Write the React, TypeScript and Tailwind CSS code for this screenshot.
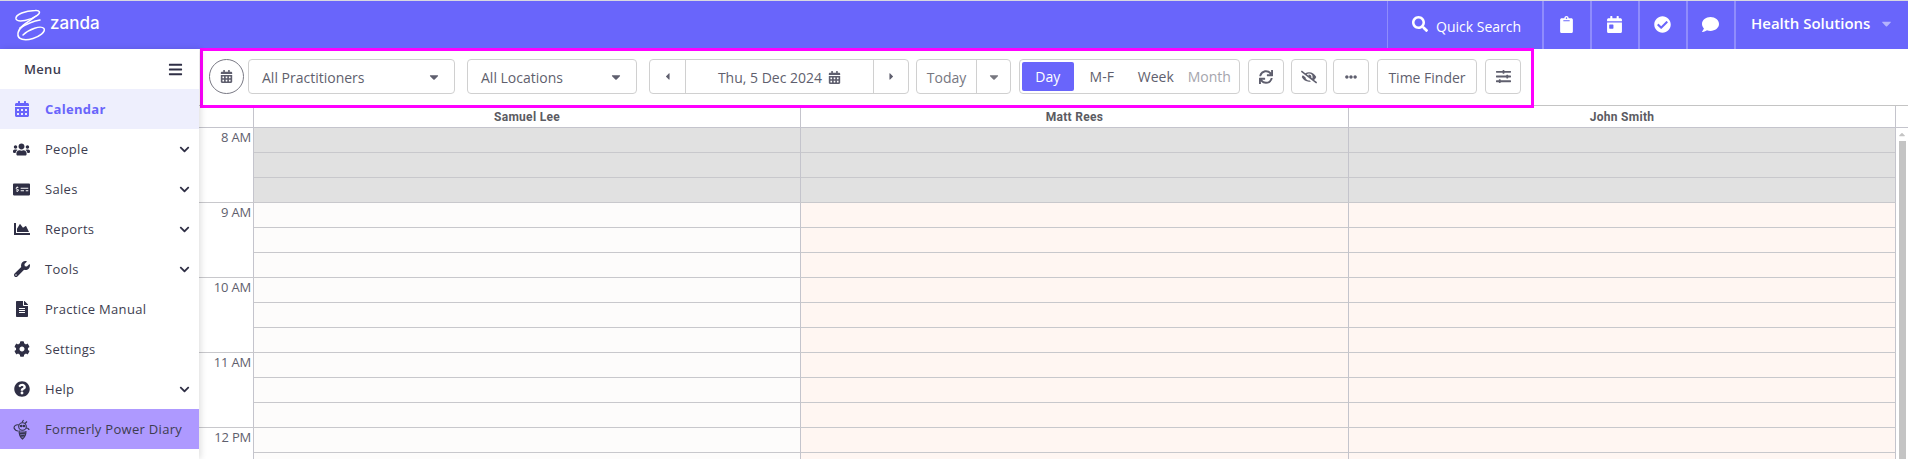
import {
  FaBars,
  FaCalendarAlt,
  FaCalendarDay,
  FaCaretDown,
  FaCaretLeft,
  FaCaretRight,
  FaChartArea,
  FaCheckCircle,
  FaChevronDown,
  FaClipboard,
  FaComment,
  FaEllipsisH,
  FaEyeSlash,
  FaFileAlt,
  FaMoneyCheckAlt,
  FaQuestionCircle,
  FaSearch,
  FaSlidersH,
  FaSync,
  FaUsers,
  FaWrench,
  FaCog,
} from "react-icons/fa";

const ZandaLogo = () => (
  <svg width="33" height="33" viewBox="0 0 33 33" fill="none" stroke="#fff" strokeWidth="1.5" strokeLinecap="round">
    <path d="M2 10C1 5 12 2 21 1.5C26 1 27 3.5 23 6.5C17 11 4 14 2 10Z" />
    <path d="M23 6.5C17 11 5 17 4 24C3 31 11 32 19 29.5C25 27.5 32 23 30 19.5C27 16 15 20 9 26" />
    <path d="M6 19C11 16 20 12 26 11" />
  </svg>
);

const BeeIcon = () => (
  <svg width="17" height="21" viewBox="0 0 17 21" fill="none" stroke="#34344c" strokeWidth="1.1">
    <path d="M6 6C3 5 1 7 1 9c1 2 3 3 4 3" />
    <circle cx="9.5" cy="7.5" r="3.8" />
    <circle cx="8.2" cy="7" r="0.8" fill="#34344c" />
    <circle cx="11" cy="7" r="0.8" fill="#34344c" />
    <path d="M9 3.5L10.5 1M12 4.5L14 2.5M13 9c2 0 3 1 3 2M6 11.5c0 4 1.5 7 3.5 8.5c2-1.5 3.5-4 3.5-8" fill="#34344c" fillOpacity="0.45" />
    <path d="M6.5 14.5l6-0.5M7.5 17l4-0.5" strokeWidth="1.4" />
  </svg>
);

const menuItems = [
  { label: "People", icon: <FaUsers size={17} />, more: true },
  { label: "Sales", icon: <FaMoneyCheckAlt size={17} />, more: true },
  { label: "Reports", icon: <FaChartArea size={16} />, more: true },
  { label: "Tools", icon: <FaWrench size={16} />, more: true },
  { label: "Practice Manual", icon: <FaFileAlt size={16} />, more: false },
  { label: "Settings", icon: <FaCog size={16} />, more: false },
  { label: "Help", icon: <FaQuestionCircle size={16} />, more: true },
];

const Sidebar = () => (
  <aside className="relative z-10 flex w-[199px] shrink-0 flex-col bg-white text-[13px] font-medium tracking-[0.3px] text-[#3d3d50] shadow-[2px_0_6px_rgba(0,0,0,0.12)]">
    <div className="flex h-10 items-center justify-between pl-6 pr-[16px]">
      <span className="pt-[1px] font-semibold">Menu</span>
      <FaBars size={15} className="text-[#2f2f45]" />
    </div>
    <div className="flex h-10 items-center bg-[#eeeffd] text-[#6965fb]">
      <span className="flex w-[45px] justify-center pr-[2px]">
        <FaCalendarAlt size={16} />
      </span>
      <span className="pt-[1px] font-bold">Calendar</span>
    </div>
    {menuItems.map((item) => (
      <div key={item.label} className="flex h-10 items-center pr-[9px]">
        <span className="flex w-[45px] justify-center pr-[2px] text-[#2f2f45]">{item.icon}</span>
        <span className="flex-1 pt-[1px]">{item.label}</span>
        {item.more && <FaChevronDown size={11} className="text-[#2f2f45]" />}
      </div>
    ))}
    <div className="flex h-10 items-center bg-[#ae99ff]">
      <span className="flex w-[45px] justify-center pr-[2px]">
        <BeeIcon />
      </span>
      <span className="pt-[1px]">Formerly Power Diary</span>
    </div>
  </aside>
);

const TopIcon = ({ children }: { children: React.ReactNode }) => (
  <div className="flex h-full w-[48px] items-center justify-center border-l-2 border-[#8f8cfc] pb-[2px] pr-[1px] text-white">{children}</div>
);

const TopBar = () => (
  <header className="flex h-[49px] items-stretch border-t border-[#d8d8e0] bg-[#6965fb] text-white">
    <div className="flex w-[199px] items-center pl-[14px]">
      <ZandaLogo />
      <span className="mb-[3px] ml-[3px] font-['Inter',sans-serif] text-[17px] font-medium leading-none">zanda</span>
    </div>
    <div className="flex-1" />
    <div className="flex w-[155px] items-center border-l border-[#8f8cfc] pl-[24px]">
      <FaSearch size={16} className="mb-[3px]" />
      <span className="ml-[8px] mt-[2px] text-[14px]">Quick Search</span>
    </div>
    <TopIcon>
      <FaClipboard size={17} />
    </TopIcon>
    <TopIcon>
      <FaCalendarDay size={17} />
    </TopIcon>
    <TopIcon>
      <FaCheckCircle size={17} />
    </TopIcon>
    <TopIcon>
      <FaComment size={17} />
    </TopIcon>
    <div className="flex w-[174px] items-center border-l-2 border-[#8f8cfc] pb-[3px] pl-[15px] text-[15px] font-semibold">
      <span>Health Solutions</span>
      <FaCaretDown size={15} className="ml-[9px] text-[#b5b3fd]" />
    </div>
  </header>
);

const btn = "flex h-[35px] items-center rounded-[4px] border border-[#d0d0d0] bg-white text-[#5f5f6e]";

const Select = ({ label, width }: { label: string; width: string }) => (
  <div className={`${btn} ${width} justify-between border-[#bdbdbd] pl-[13px] pr-[13px] text-[14px]`}>
    <span className="pt-[1px]">{label}</span>
    <FaCaretDown size={14} className="text-[#5f5f6e]" />
  </div>
);

const IconButton = ({ className, children }: { className: string; children: React.ReactNode }) => (
  <div className={`${btn} ${className} w-[36px] justify-center`}>{children}</div>
);

const Toolbar = () => (
  <div className="relative flex h-[57px] items-start border-b border-[#c4c4c4] bg-white pl-[10px] pt-[10px]">
    <div className="flex h-[35px] w-[35px] items-center justify-center rounded-full border border-[#7a7a85] text-[#5f5f6e]">
      <FaCalendarAlt size={13} />
    </div>
    <div className="ml-[4px]">
      <Select label="All Practitioners" width="w-[207px]" />
    </div>
    <div className="ml-[12px]">
      <Select label="All Locations" width="w-[170px]" />
    </div>
    <div className={`${btn} ml-[12px] w-[260px]`}>
      <span className="flex h-full w-[36px] items-center justify-center border-r border-[#d0d0d0]">
        <FaCaretLeft size={11} />
      </span>
      <span className="flex h-full flex-1 items-center justify-center gap-[6px] pt-[1px] text-[14px]">
        Thu, 5 Dec 2024
        <FaCalendarAlt size={13} />
      </span>
      <span className="flex h-full w-[35px] items-center justify-center border-l border-[#d0d0d0]">
        <FaCaretRight size={11} />
      </span>
    </div>
    <div className={`${btn} ml-[7px] w-[95px]`}>
      <span className="flex h-full flex-1 items-center justify-center border-r border-[#d0d0d0] pt-[1px] text-[14px] text-[#77777f]">Today</span>
      <span className="flex h-full w-[33px] items-center justify-center">
        <FaCaretDown size={14} className="text-[#77777f]" />
      </span>
    </div>
    <div className={`${btn} ml-[8px] w-[221px] px-[2px] text-[14px]`}>
      <span className="flex h-[29px] w-[52px] items-center justify-center rounded-[2px] bg-[#6965fb] text-white">Day</span>
      <span className="w-[57px] text-center">M-F</span>
      <span className="w-[52px] text-center">Week</span>
      <span className="w-[56px] text-center text-[#a5a5ad]">Month</span>
    </div>
    <IconButton className="ml-[8px]">
      <FaSync size={14} />
    </IconButton>
    <IconButton className="ml-[7px]">
      <FaEyeSlash size={16} />
    </IconButton>
    <IconButton className="ml-[6px]">
      <FaEllipsisH size={12} />
    </IconButton>
    <div className={`${btn} ml-[8px] w-[100px] justify-center pt-[1px] text-[14px]`}>Time Finder</div>
    <IconButton className="ml-[8px]">
      <FaSlidersH size={15} />
    </IconButton>
    <div className="pointer-events-none absolute left-[1px] top-[-1px] h-[60px] w-[1334px] border-[3px] border-[#ff00ff]" />
  </div>
);

const hours = ["8 AM", "9 AM", "10 AM", "11 AM", "12 PM"];
const practitioners = ["Samuel Lee", "Matt Rees", "John Smith"];
const colWidths = ["w-[547px]", "w-[548px]", "w-[547px]"];

const Scheduler = () => (
  <div className="min-h-0 flex-1 overflow-hidden">
    <div className="flex h-[22px] border-b border-[#c4c4cc] bg-white font-['Roboto',sans-serif] text-[12px] font-bold tracking-[0.3px] text-[#5b5b62]">
      <div className="w-[54px] shrink-0" />
      {practitioners.map((name, i) => (
        <div key={name} className={`${colWidths[i]} flex items-center justify-center border-l border-[#c4c4cc] pt-[1px]`}>
          {name}
        </div>
      ))}
      <div className="w-[13px] border-l border-[#c4c4cc]" />
    </div>
    <div className="relative flex">
      <div className="flex-1">
        {hours.map((hour, h) => (
          <div key={hour} className="flex h-[75px] border-b border-[#c8c8cc]">
            <div className="w-[54px] shrink-0 pr-[2px] text-right text-[13px] leading-[19px] tracking-[-0.2px] text-[#5f5f6e]">{hour}</div>
            {practitioners.map((name, i) => (
              <div
                key={name}
                className={`${colWidths[i]} flex flex-col border-l border-[#c4c4cc] ${
                  h === 0 ? "bg-[#e1e1e1]" : i === 0 ? "bg-[#fdfcfb]" : "bg-[#fff6f2]"
                }`}
              >
                <div className="h-[25px] border-b border-[#c8c8cc]" />
                <div className="h-[25px] border-b border-[#c8c8cc]" />
              </div>
            ))}
            <div className="w-[13px] border-l border-[#c4c4cc] bg-white" />
          </div>
        ))}
      </div>
      <div className="absolute right-0 top-0 flex h-full w-[12px] flex-col items-center bg-white">
        <FaCaretDown size={10} className="mt-[2px] rotate-180 text-[#c4c4c4]" />
        <div className="ml-[1px] mt-[1px] w-[7px] flex-1 bg-[#c4c4c4]" />
      </div>
    </div>
  </div>
);

export default function App() {
  return (
    <div className="flex h-[459px] w-[1908px] flex-col overflow-hidden bg-white font-['Open_Sans',sans-serif]">
      <TopBar />
      <div className="flex min-h-0 flex-1">
        <Sidebar />
        <main className="flex min-w-0 flex-1 flex-col">
          <Toolbar />
          <Scheduler />
        </main>
      </div>
    </div>
  );
}
